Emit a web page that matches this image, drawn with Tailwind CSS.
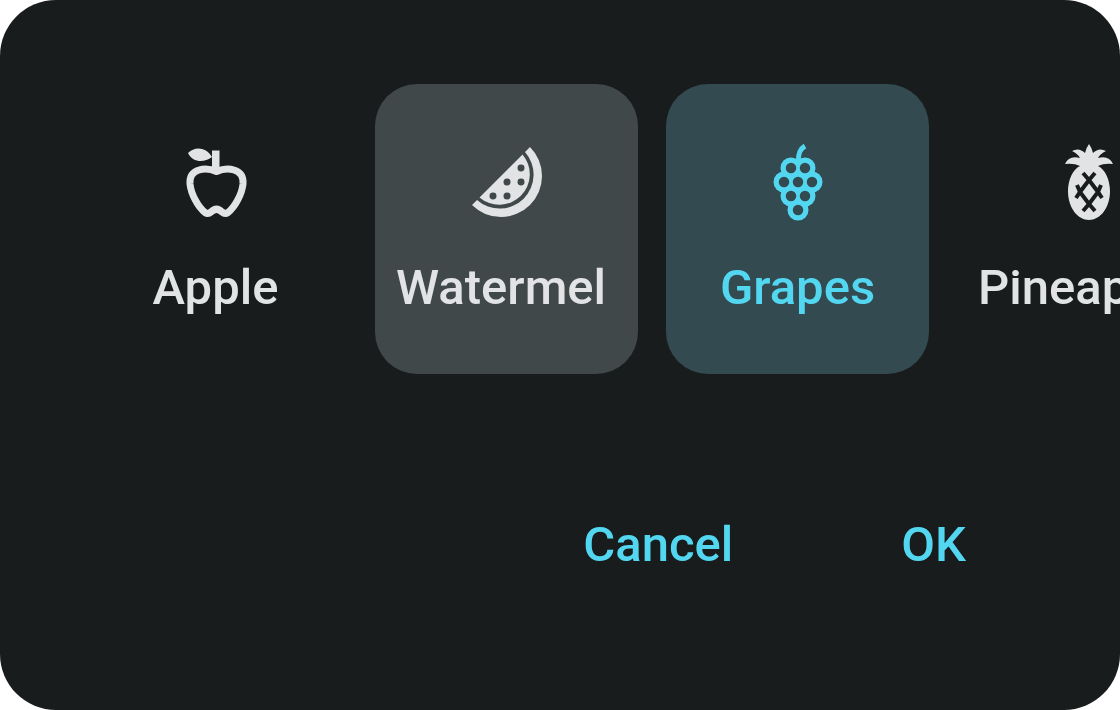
<!DOCTYPE html>
<html lang="en">
<head>
<meta charset="utf-8">
<meta name="viewport" content="width=device-width, initial-scale=1">
<title>Choose a fruit</title>
<script src="https://cdn.jsdelivr.net/npm/@tailwindcss/browser@4"></script>
</head>
<body class="bg-white font-['Roboto',sans-serif] text-[49px] leading-[72px] font-medium text-[#e1e3e4]">
<main class="flex min-h-screen flex-col overflow-hidden rounded-[56px] bg-[#191c1d] pt-[84px]">
  <div class="flex gap-7 overflow-hidden pl-[84px]" role="group" aria-label="Fruit">
    <button type="button" class="flex h-[290px] w-[263px] shrink-0 flex-col items-center gap-7 rounded-[42px] px-[21px] pt-14">
      <svg class="size-[84px] shrink-0" viewBox="0 0 84 84" fill="none" aria-hidden="true">
        <path d="M14 13C21 6 32 7 38 17C30 23 19 23 14 13Z" fill="currentColor"/>
        <path d="M38 10.500H45.500V30H38Z" fill="currentColor"/>
        <path d="M42.500 31.500C37 29 31 28 25 30C18 32 15.500 37 16 44C17 54 24 67 31 72.500Q34 74.500 37 72Q42.500 66.500 48 72Q51 74.500 54 72.500C61 67 68 54 69 44C69.500 37 67 32 60 30C54 28 48 29 42.500 31.500Z" stroke="currentColor" stroke-width="7" stroke-linejoin="round"/>
      </svg>
      <span>Apple</span>
    </button>
    <button type="button" class="flex h-[290px] w-[263px] shrink-0 flex-col items-center gap-7 rounded-[42px] bg-[#40484a] px-[21px] pt-14">
      <svg class="size-[84px] shrink-0" viewBox="0 0 84 84" fill="currentColor" aria-hidden="true">
        <path d="M65 7A41 41 0 0 1 7 65L12 60A34 34 0 0 0 60 12Z"/>
        <path fill-rule="evenodd" d="M57.500 14.500A30.500 30.500 0 0 1 14.500 57.500ZM52.500 28a3.500 3.500 0 1 0 7 0a3.500 3.500 0 1 0-7 0ZM38.500 42a3.500 3.500 0 1 0 7 0a3.500 3.500 0 1 0-7 0ZM52.500 42a3.500 3.500 0 1 0 7 0a3.500 3.500 0 1 0-7 0ZM24.500 56a3.500 3.500 0 1 0 7 0a3.500 3.500 0 1 0-7 0ZM38.500 56a3.500 3.500 0 1 0 7 0a3.500 3.500 0 1 0-7 0Z"/>
      </svg>
      <span class="self-start">Watermel</span>
    </button>
    <button type="button" aria-pressed="true" class="flex h-[290px] w-[263px] shrink-0 flex-col items-center gap-7 rounded-[42px] bg-[#334b50] px-[21px] pt-14 text-[#53d7f1]">
      <svg class="size-[84px] shrink-0" viewBox="0 0 84 84" aria-hidden="true">
        <path d="M42.500 22C42 13 44 9 49 6" fill="none" stroke="currentColor" stroke-width="5"/>
        <g fill="currentColor">
          <circle cx="35" cy="28" r="10.500"/><circle cx="49" cy="28" r="10.500"/>
          <circle cx="28" cy="42" r="10.500"/><circle cx="42" cy="42" r="10.500"/><circle cx="56" cy="42" r="10.500"/>
          <circle cx="35" cy="56" r="10.500"/><circle cx="49" cy="56" r="10.500"/><circle cx="42" cy="70" r="10.500"/>
        </g>
        <g fill="#334b50">
          <circle cx="35" cy="28" r="5.250"/><circle cx="49" cy="28" r="5.250"/>
          <circle cx="28" cy="42" r="5.250"/><circle cx="42" cy="42" r="5.250"/><circle cx="56" cy="42" r="5.250"/>
          <circle cx="35" cy="56" r="5.250"/><circle cx="49" cy="56" r="5.250"/><circle cx="42" cy="70" r="5.250"/>
        </g>
      </svg>
      <span>Grapes</span>
    </button>
    <button type="button" class="flex h-[290px] w-[263px] shrink-0 flex-col items-center gap-7 rounded-[42px] px-[21px] pt-14">
      <svg class="size-[84px] shrink-0" viewBox="0 0 84 84" aria-hidden="true">
        <path fill="currentColor" d="M42 4Q45 8 46 13Q52 7 59 11Q53 14 51 18Q62 15 66 24Q57 23 51 26C58 29 63 40 63 51C63 68 53 80 42 80S21 68 21 51C21 40 26 29 33 26Q27 23 18 24Q22 15 33 18Q31 14 25 11Q32 7 38 13Q39 8 42 4Z"/>
        <path d="M36 33L42 40L51 52L55 58M48 33L42 40L33 52L29 58M30 45L33 52L42 64L48 71M54 45L51 52L42 64L36 71" fill="none" stroke="#191c1d" stroke-width="4"/>
      </svg>
      <span class="self-start">Pineapple</span>
    </button>
  </div>
  <div class="flex justify-end gap-[84px] pt-[135px] pr-28">
    <button type="button" class="px-[42px] text-[#53d7f1]">Cancel</button>
    <button type="button" class="px-[42px] text-[#53d7f1]">OK</button>
  </div>
</main>
</body>
</html>
